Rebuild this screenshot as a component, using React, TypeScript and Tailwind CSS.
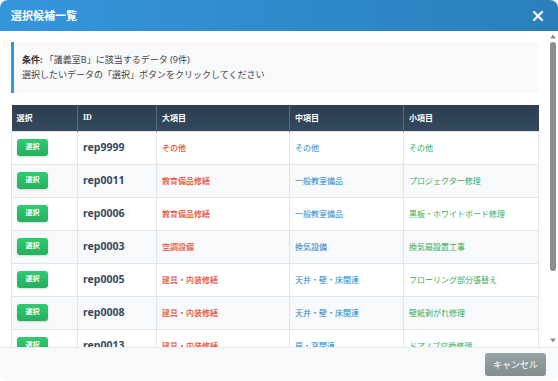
import React from "react";

const rows = [
  ["rep9999", "その他", "その他", "その他"],
  ["rep0011", "教育備品修繕", "一般教室備品", "プロジェクター修理"],
  ["rep0006", "教育備品修繕", "一般教室備品", "黒板・ホワイトボード修理"],
  ["rep0003", "空調設備", "換気設備", "換気扇設置工事"],
  ["rep0005", "建具・内装修繕", "天井・壁・床関連", "フローリング部分張替え"],
  ["rep0008", "建具・内装修繕", "天井・壁・床関連", "壁紙剥がれ修理"],
  ["rep0013", "建具・内装修繕", "扉・窓関連", "ドアノブ交換修理"],
  ["rep0002", "建具・内装修繕", "扉・窓関連", "窓ガラス交換"],
  ["rep0010", "その他", "その他", "鍵交換"],
];

const jp = "font-['Noto_Sans','Noto_Sans_CJK_JP',sans-serif]";

export default function App() {
  return (
    <div className={`w-[558px] h-[381px] bg-white ${jp}`}>
      <div className="w-full h-full flex flex-col rounded-[8px] overflow-hidden bg-white">
        <div className="h-[31px] shrink-0 flex items-center justify-between pl-[11px] pr-[14px] bg-gradient-to-r from-[#3596dc] to-[#2a7fba]">
          <span className="text-white font-bold text-[11px] leading-none">選択候補一覧</span>
          <svg width="12" height="12" viewBox="0 0 12 12">
            <path d="M2 2 L10 10 M10 2 L2 10" stroke="white" strokeWidth="2.2" strokeLinecap="round" />
          </svg>
        </div>
        <div className="flex-1 min-h-0 flex">
          <div className="flex-1 min-w-0 overflow-hidden pt-[11px] pl-[11px]">
            <div className="w-[527px]">
              <div className="h-[51px] bg-[#f8f9fa] border-l-[3px] border-[#3498db] rounded-r-[4px] pl-[8px] flex flex-col justify-center gap-[5px] text-[9px] leading-[10px] text-[#444]">
                <div>
                  <span className="font-bold text-[#333]">条件:</span> 「議義室B」に該当するデータ (9件)
                </div>
                <div>選択したいデータの「選択」ボタンをクリックしてください</div>
              </div>
              <table className="mt-[12px] w-[527px] border-collapse table-fixed">
                <colgroup>
                  <col className="w-[66px]" />
                  <col className="w-[79px]" />
                  <col className="w-[133px]" />
                  <col className="w-[114px]" />
                  <col className="w-[135px]" />
                </colgroup>
                <thead>
                  <tr className="h-[26px] bg-gradient-to-b from-[#2c3e50] to-[#34495e] text-white text-[8px] font-bold">
                    <th className="text-left pl-[5px] border-r border-[#5a6b7c]">選択</th>
                    <th className="text-left pl-[5px] border-r border-[#5a6b7c] font-['Liberation_Serif',serif]">ID</th>
                    <th className="text-left pl-[5px] border-r border-[#5a6b7c]">大項目</th>
                    <th className="text-left pl-[5px] border-r border-[#5a6b7c]">中項目</th>
                    <th className="text-left pl-[5px]">小項目</th>
                  </tr>
                </thead>
                <tbody>
                  {rows.map((r, i) => (
                    <tr key={r[0]} className={`h-[33px] ${i % 2 === 1 ? "bg-[#f8f9fa]" : "bg-white"}`}>
                      <td className="pl-[5px] border border-[#e3e6e8]">
                        <div className="w-[31px] h-[17px] rounded-[3px] bg-gradient-to-b from-[#2ecc71] to-[#27ae60] flex items-center justify-center text-white text-[7px] font-bold shadow-[0_1px_2px_rgba(0,0,0,0.15)]">
                          選択
                        </div>
                      </td>
                      <td className="pl-[5px] border border-[#e3e6e8] text-[10.5px] font-bold text-[#34495e]">{r[0]}</td>
                      <td className="pl-[5px] border border-[#e3e6e8] text-[8px] text-[#e74c3c] font-medium">{r[1]}</td>
                      <td className="pl-[5px] border border-[#e3e6e8] text-[8px] text-[#2e86c1]">{r[2]}</td>
                      <td className="pl-[5px] border border-[#e3e6e8] text-[8px] text-[#3bab5a]">{r[3]}</td>
                    </tr>
                  ))}
                </tbody>
              </table>
            </div>
          </div>
          <div className="w-[10px] shrink-0 flex flex-col items-center pt-[3px] pb-[4px] bg-white">
            <svg width="6" height="5" viewBox="0 0 6 5">
              <path d="M3 0.5 L5.8 4.5 L0.2 4.5 Z" fill="#8a8a8a" />
            </svg>
            <div className="mt-[3px] w-[6px] h-[229px] rounded-[3px] bg-[#8c8c8c]" />
            <div className="flex-1" />
            <svg width="6" height="5" viewBox="0 0 6 5">
              <path d="M0.2 0.5 L5.8 0.5 L3 4.5 Z" fill="#8a8a8a" />
            </svg>
          </div>
        </div>
        <div className="h-[34px] shrink-0 bg-[#f8f9fa] border-t border-[#e9ecef] flex items-center justify-end pr-[12px]">
          <div className="w-[61px] h-[23px] rounded-[3px] bg-gradient-to-b from-[#97a3a4] to-[#828e8f] flex items-center justify-center text-white text-[9px]">
            キャンセル
          </div>
        </div>
      </div>
    </div>
  );
}
